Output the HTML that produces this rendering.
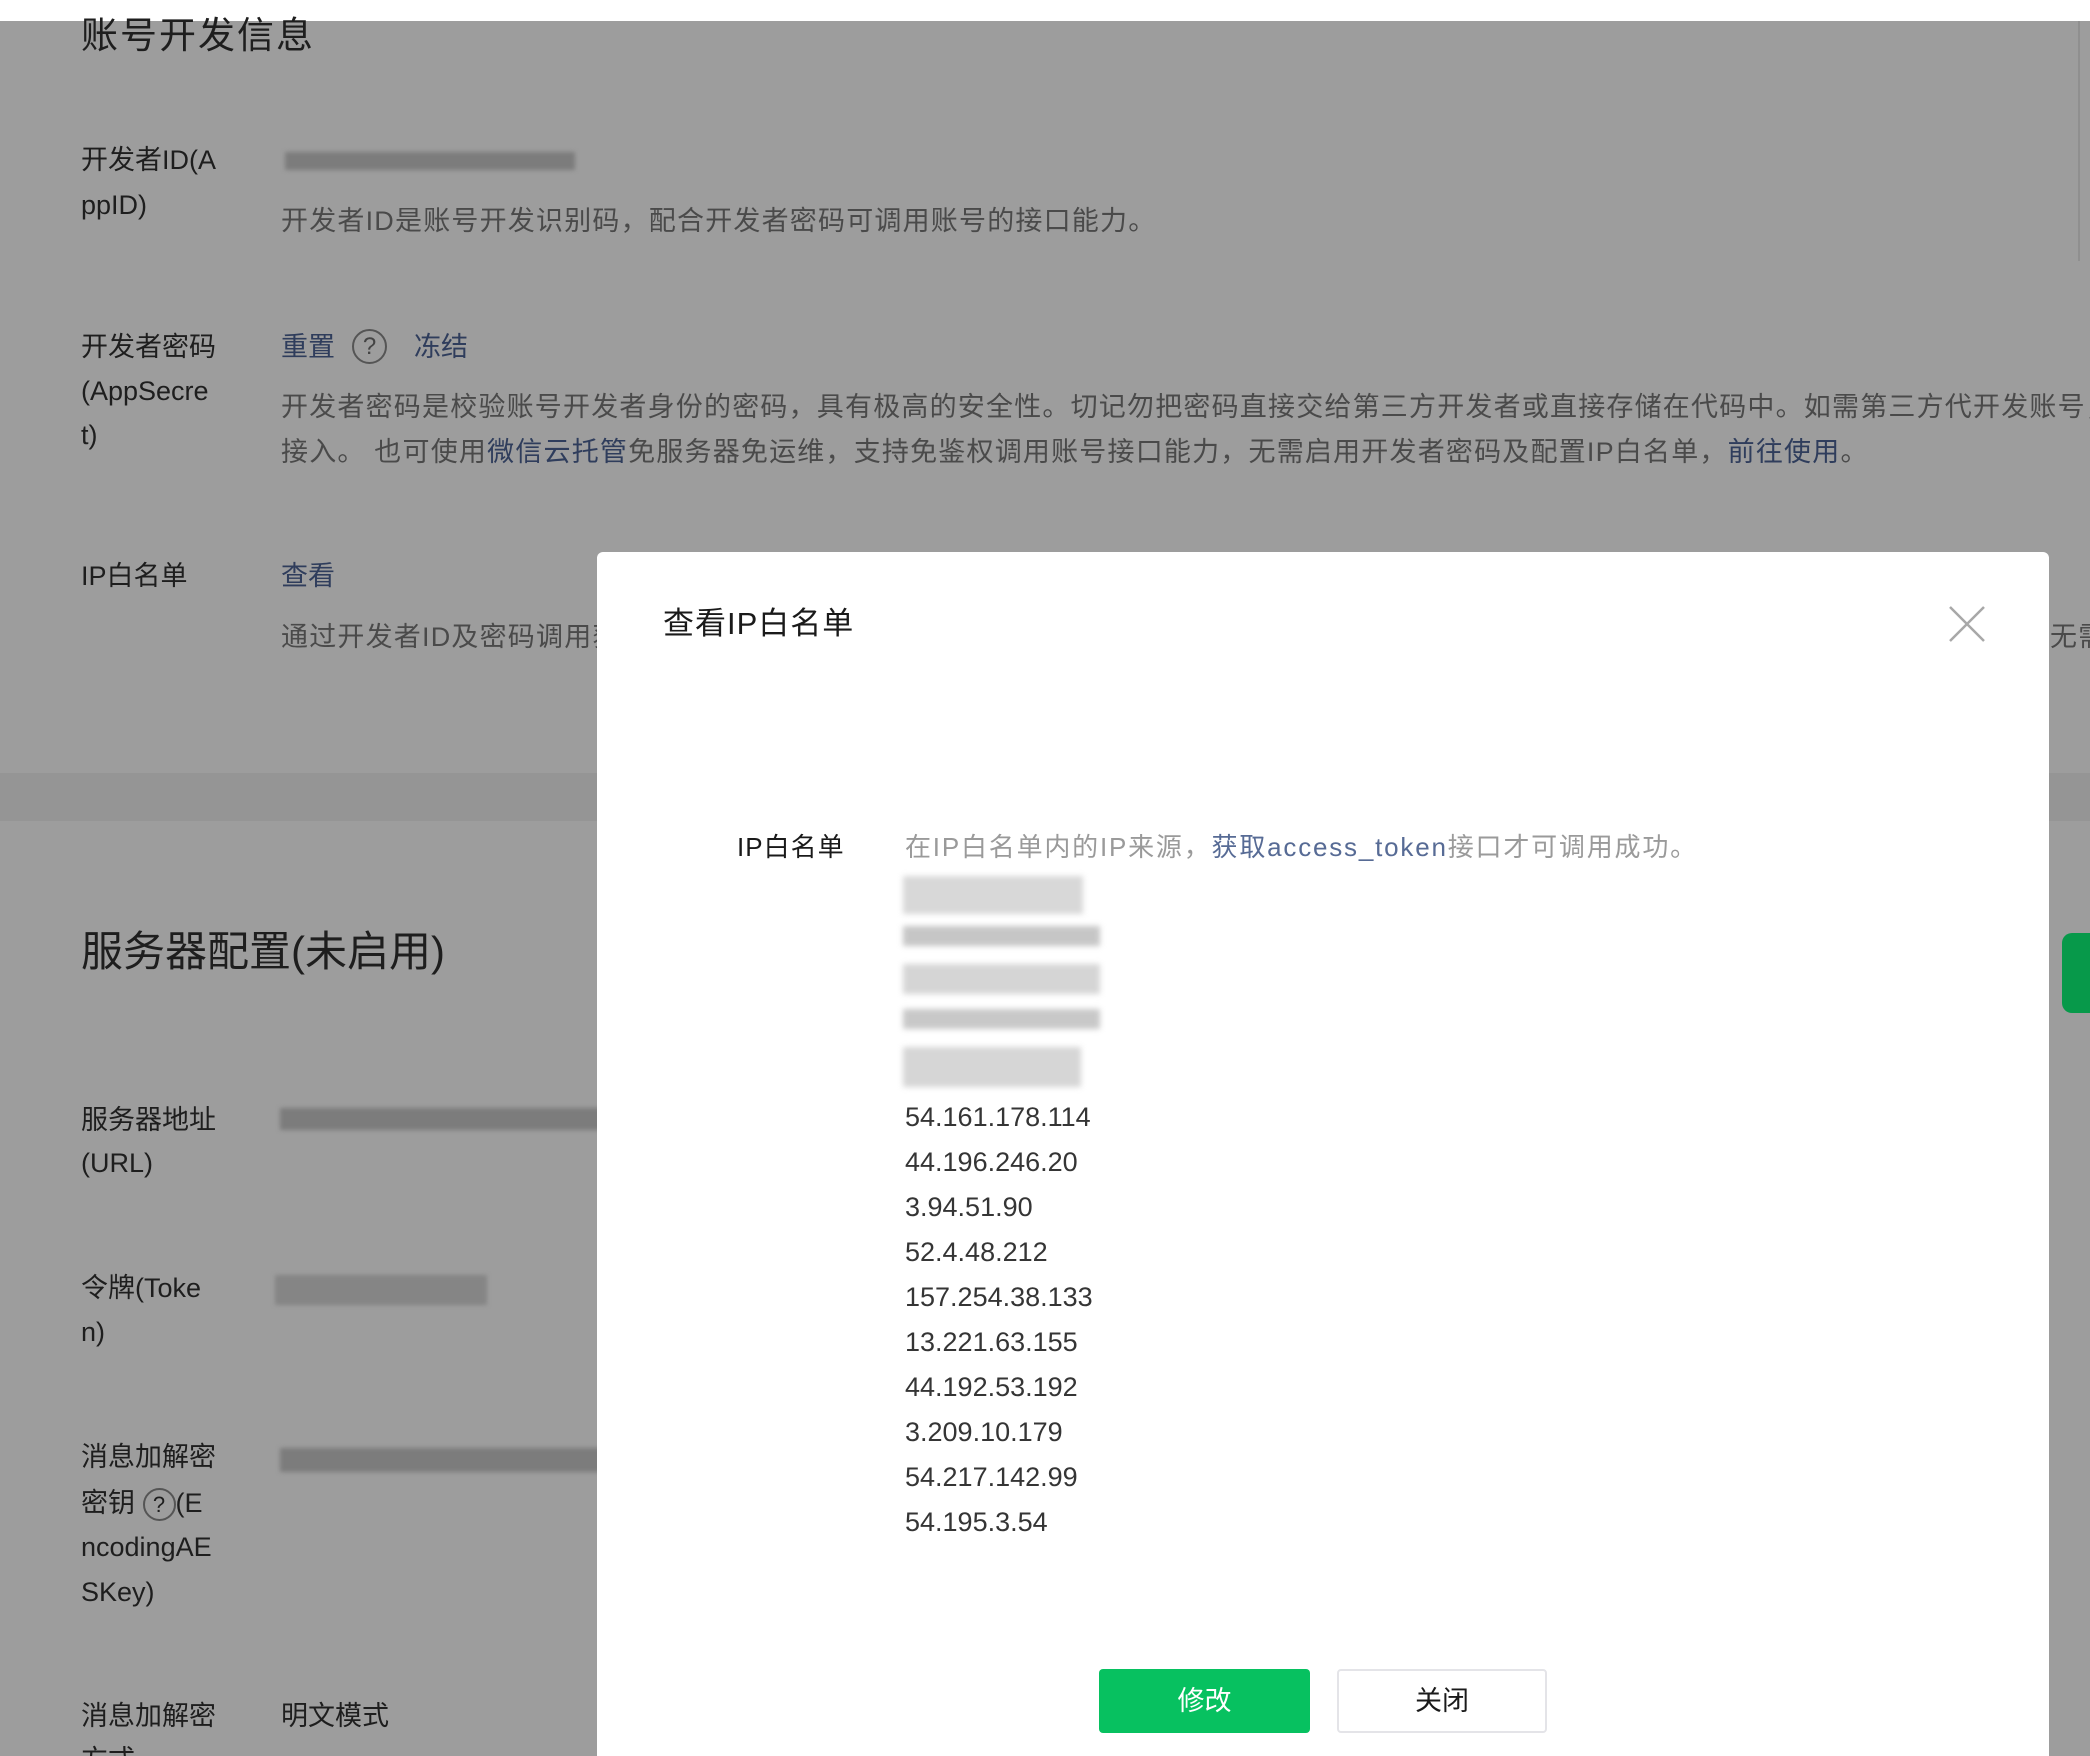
<!DOCTYPE html>
<html style="overflow:hidden;width:2090px;height:1756px"><head><meta charset="utf-8"><style>
*{margin:0;padding:0;box-sizing:border-box}
html,body{width:2090px;height:1756px;overflow:hidden}
body{background:#9d9d9d;position:relative;font-family:"Liberation Sans","Noto Sans CJK SC",sans-serif;color:#1e1e1e}
.t{position:absolute;white-space:nowrap;font-size:27px;line-height:40px}
.d{color:#4a4a4a;letter-spacing:1.2px}
.l{color:#2f3d5c}
.b{position:absolute;background:#7c7c7c;filter:blur(2px)}
.m .t{color:#353535}
</style></head><body>
<div style="position:absolute;left:0;top:0;width:2090px;height:21px;background:#fff"></div>
<div style="position:absolute;left:0;top:773px;width:2090px;height:48px;background:#959595"></div>
<div style="position:absolute;left:2078px;top:21px;width:12px;height:240px;border-left:2px solid #8f8f8f"></div>

<div class="t" style="left:81px;top:14px;font-size:37px;line-height:44px;letter-spacing:2px">账号开发信息</div>
<div class="t" style="left:81px;top:140px">开发者ID(A</div>
<div class="t" style="left:81px;top:185px">ppID)</div>
<div class="b" style="left:285px;top:152px;width:290px;height:18px"></div>
<div class="t d" style="left:281px;top:201px">开发者ID是账号开发识别码，配合开发者密码可调用账号的接口能力。</div>

<div class="t" style="left:81px;top:327px">开发者密码</div>
<div class="t" style="left:81px;top:371px">(AppSecre</div>
<div class="t" style="left:81px;top:415px">t)</div>
<div class="t l" style="left:281px;top:327px">重置</div>
<div style="position:absolute;left:352px;top:329px;width:35px;height:35px;border:2px solid #555;border-radius:50%;color:#444;font-size:24px;text-align:center;line-height:31px">?</div>
<div class="t l" style="left:414px;top:327px">冻结</div>
<div class="t d" style="left:281px;top:387px">开发者密码是校验账号开发者身份的密码，具有极高的安全性。切记勿把密码直接交给第三方开发者或直接存储在代码中。如需第三方代开发账号，</div>
<div class="t d" style="left:281px;top:432px">接入。 也可使用<span class="l">微信云托管</span>免服务器免运维，支持免鉴权调用账号接口能力，无需启用开发者密码及配置IP白名单，<span class="l">前往使用</span>。</div>

<div class="t" style="left:81px;top:556px">IP白名单</div>
<div class="t l" style="left:281px;top:556px">查看</div>
<div class="t d" style="left:281px;top:617px">通过开发者ID及密码调用获</div>
<div class="t d" style="left:2050px;top:617px">无需</div>

<div class="t" style="left:81px;top:926px;font-size:42px;line-height:52px">服务器配置(未启用)</div>
<div class="t" style="left:81px;top:1100px">服务器地址</div>
<div class="t" style="left:81px;top:1143px">(URL)</div>
<div class="b" style="left:280px;top:1108px;width:330px;height:22px"></div>
<div class="t" style="left:81px;top:1268px">令牌(Toke</div>
<div class="t" style="left:81px;top:1312px">n)</div>
<div class="b" style="left:275px;top:1275px;width:212px;height:30px;background:#858585"></div>
<div class="t" style="left:81px;top:1437px">消息加解密</div>
<div class="t" style="left:81px;top:1483px">密钥 <span style="display:inline-block;width:33px;height:33px;border:2px solid #555;border-radius:50%;text-align:center;line-height:29px;font-size:22px;vertical-align:middle">?</span>(E</div>
<div class="t" style="left:81px;top:1527px">ncodingAE</div>
<div class="t" style="left:81px;top:1572px">SKey)</div>
<div class="b" style="left:280px;top:1448px;width:330px;height:24px"></div>
<div class="t" style="left:81px;top:1696px">消息加解密</div>
<div class="t" style="left:81px;top:1740px">方式</div>
<div class="t" style="left:281px;top:1696px">明文模式</div>
<div style="position:absolute;left:2062px;top:933px;width:40px;height:80px;background:#07994a;border-radius:10px"></div>

<div class="m" style="position:absolute;left:597px;top:552px;width:1452px;height:1204px;background:#fff;border-radius:6px 6px 0 0">
  <div class="t" style="left:66px;top:52px;font-size:31px;line-height:40px;color:#1a1a1a;letter-spacing:1px">查看IP白名单</div>
  <svg style="position:absolute;left:1350px;top:52px" width="40" height="40" viewBox="0 0 40 40"><path d="M3 3L37 37M37 3L3 37" stroke="#a8a8a8" stroke-width="2.5"/></svg>
  <div class="t" style="left:140px;top:275px;font-size:26px;color:#1a1a1a;letter-spacing:1px">IP白名单</div>
  <div class="t" style="left:308px;top:275px;font-size:26px;color:#9a9a9a;letter-spacing:1.8px">在IP白名单内的IP来源，<span style="color:#576b95">获取access_token</span>接口才可调用成功。</div>
  <div style="position:absolute;left:306px;top:324px;width:197px;height:218px;filter:blur(3px)">
    <div style="position:absolute;left:0;top:0;width:180px;height:38px;background:#d8d8d8"></div>
    <div style="position:absolute;left:0;top:50px;width:197px;height:20px;background:#c6c6c6"></div>
    <div style="position:absolute;left:0;top:88px;width:197px;height:30px;background:#d5d5d5"></div>
    <div style="position:absolute;left:0;top:133px;width:197px;height:20px;background:#c8c8c8"></div>
    <div style="position:absolute;left:0;top:171px;width:178px;height:40px;background:#d6d6d6"></div>
  </div>
  <div class="t" style="left:308px;top:543px;line-height:45px;font-size:27px;white-space:pre">54.161.178.114
44.196.246.20
3.94.51.90
52.4.48.212
157.254.38.133
13.221.63.155
44.192.53.192
3.209.10.179
54.217.142.99
54.195.3.54</div>
  <div style="position:absolute;left:502px;top:1117px;width:211px;height:64px;background:#07c160;border-radius:4px;color:#fff;font-size:27px;text-align:center;line-height:64px">修改</div>
  <div style="position:absolute;left:740px;top:1117px;width:210px;height:64px;background:#fff;border:2px solid #e4e4e8;border-radius:4px;color:#1a1a1a;font-size:27px;text-align:center;line-height:60px">关闭</div>
</div>
</body></html>
